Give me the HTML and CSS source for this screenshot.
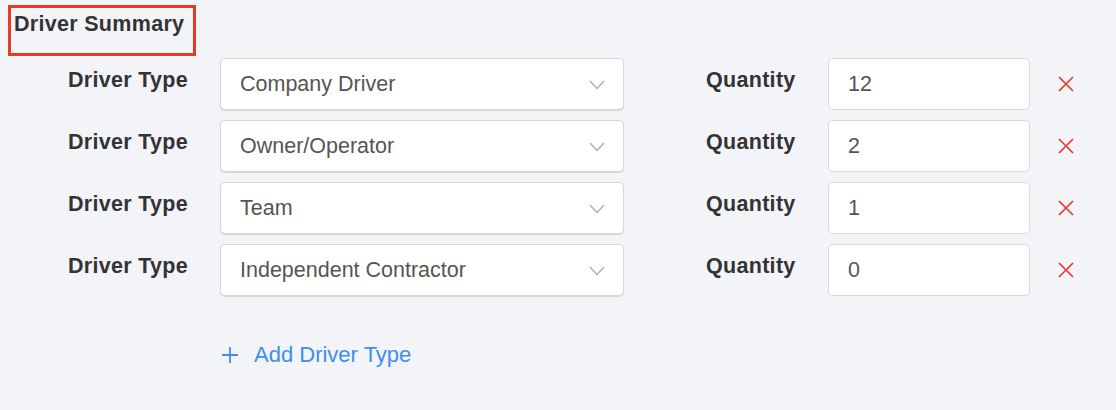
FILE: index.html
```html
<!doctype html>
<html lang="en">
<head>
	<meta charset="UTF-8">
	<title>Driver Summary</title>
	<link rel="stylesheet" href="styles.css">
</head>
<body>
	<div class="summary">
		<div class="title-box">
			<h2 class="title">Driver Summary</h2>
		</div>
		<div class="rows">
			<div class="row">
				<label class="label">Driver Type</label>
				<div class="select">
					<span>Company Driver</span>
					<svg class="chevron" width="16" height="10" viewBox="0 0 16 10"><path d="M1 1 L8 8.5 L15 1" fill="none" stroke="#aaa" stroke-width="1.2"/></svg>
				</div>
				<label class="label qty-label">Quantity</label>
				<div class="input">12</div>
				<svg class="remove" width="16" height="16" viewBox="0 0 16 16"><path d="M1 1 L15 15 M15 1 L1 15" stroke="#e8392b" stroke-width="1.7"/></svg>
			</div>
			<div class="row">
				<label class="label">Driver Type</label>
				<div class="select">
					<span>Owner/Operator</span>
					<svg class="chevron" width="16" height="10" viewBox="0 0 16 10"><path d="M1 1 L8 8.5 L15 1" fill="none" stroke="#aaa" stroke-width="1.2"/></svg>
				</div>
				<label class="label qty-label">Quantity</label>
				<div class="input">2</div>
				<svg class="remove" width="16" height="16" viewBox="0 0 16 16"><path d="M1 1 L15 15 M15 1 L1 15" stroke="#e8392b" stroke-width="1.7"/></svg>
			</div>
			<div class="row">
				<label class="label">Driver Type</label>
				<div class="select">
					<span>Team</span>
					<svg class="chevron" width="16" height="10" viewBox="0 0 16 10"><path d="M1 1 L8 8.5 L15 1" fill="none" stroke="#aaa" stroke-width="1.2"/></svg>
				</div>
				<label class="label qty-label">Quantity</label>
				<div class="input">1</div>
				<svg class="remove" width="16" height="16" viewBox="0 0 16 16"><path d="M1 1 L15 15 M15 1 L1 15" stroke="#e8392b" stroke-width="1.7"/></svg>
			</div>
			<div class="row">
				<label class="label">Driver Type</label>
				<div class="select">
					<span>Independent Contractor</span>
					<svg class="chevron" width="16" height="10" viewBox="0 0 16 10"><path d="M1 1 L8 8.5 L15 1" fill="none" stroke="#aaa" stroke-width="1.2"/></svg>
				</div>
				<label class="label qty-label">Quantity</label>
				<div class="input">0</div>
				<svg class="remove" width="16" height="16" viewBox="0 0 16 16"><path d="M1 1 L15 15 M15 1 L1 15" stroke="#e8392b" stroke-width="1.7"/></svg>
			</div>
		</div>
		<a class="add" href="javascript:void(0);">
			<svg class="plus" width="18" height="18" viewBox="0 0 18 18"><path d="M9 1 V17 M1 9 H17" stroke="#3d8ef0" stroke-width="1.8"/></svg>
			<span>Add Driver Type</span>
		</a>
	</div>
</body>
</html>
```
FILE: styles.css
```css
html, body {
	margin: 0;
	height: 100%;
	background-color: #f3f4f8;
}
body {
	font-family: "Liberation Sans", Arial, sans-serif;
	color: #333;
}
.summary {
	padding-top: 5px;
}
.title-box {
	box-sizing: border-box;
	width: 188px;
	height: 51px;
	margin-left: 8px;
	padding: 3px 0 0 3px;
	border: 3px solid #e63b27;
}
.title {
	margin: 0;
	font-size: 21.5px;
	font-weight: bold;
	letter-spacing: 0.3px;
	line-height: 26px;
	color: #333;
}
.rows {
	display: flex;
	flex-direction: column;
	gap: 10px;
	margin-top: 2px;
	padding-left: 68px;
}
.row {
	display: flex;
	align-items: flex-start;
	height: 52px;
}
.label {
	width: 152px;
	font-size: 21.5px;
	font-weight: bold;
	letter-spacing: 0.3px;
	line-height: 44px;
	color: #333;
}
.qty-label {
	width: 122px;
	margin-left: 82px;
}
.select, .input {
	box-sizing: border-box;
	display: flex;
	align-items: center;
	height: 52px;
	padding-left: 19px;
	background-color: #fff;
	border: 1px solid #d6d6d6;
	border-radius: 5px;
	box-shadow: 0 1px 1px rgba(0,0,0,.12);
	font-size: 21.5px;
	color: #555;
}
.select {
	width: 404px;
	justify-content: space-between;
	padding-right: 18px;
}
.chevron {
	display: block;
	margin-top: 1px;
}
.input {
	width: 202px;
	box-shadow: none;
	border-color: #dadada;
}
.remove {
	display: block;
	margin: 18px 0 0 28px;
}
.add {
	display: flex;
	align-items: center;
	gap: 15px;
	width: max-content;
	margin: 44px 0 0 221px;
	height: 30px;
	font-size: 22px;
	color: #3d8ef0;
	text-decoration: none;
}
.plus {
	display: block;
}
```
